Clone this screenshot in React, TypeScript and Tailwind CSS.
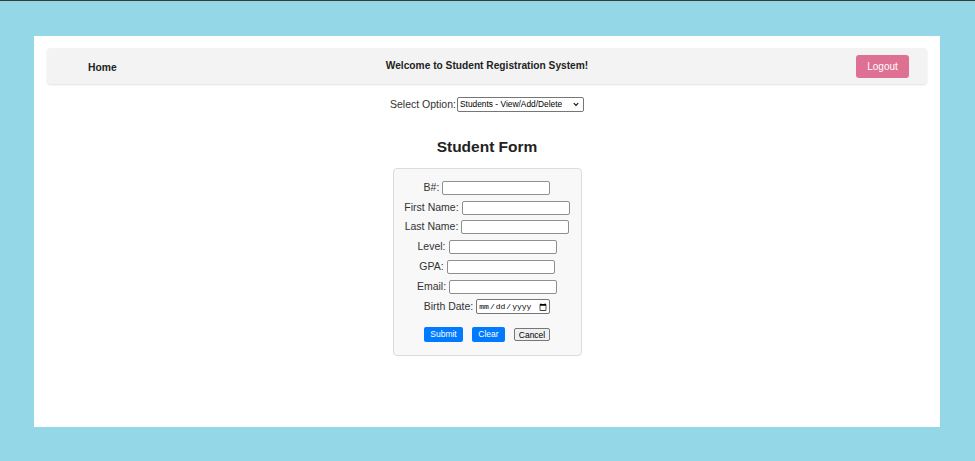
import React from 'react'

const fields = [
    { label: 'B#:', type: 'text' },
    { label: 'First Name:', type: 'text' },
    { label: 'Last Name:', type: 'text' },
    { label: 'Level:', type: 'text' },
    { label: 'GPA:', type: 'text' },
    { label: 'Email:', type: 'email' },
]

export default function App() {
    return (
        <div className="min-h-[461px] bg-[#94d8e8] border-t border-[#3a3a3a] font-['Liberation_Sans',Arial,sans-serif] text-[#222]">
            <div className="pt-[35px] pl-[34px] pr-[35px] pb-[34px]">
                <div className="bg-white h-[391px] px-[13px] pt-[12px]">

                    {/* Navbar */}
                    <nav className="h-[36px] bg-[#f3f3f3] rounded-[4px] shadow-[0_1px_2px_rgba(0,0,0,0.12)] grid grid-cols-[1fr_auto_1fr] items-center">
                        <div className="pl-[41px]">
                            <a href="#" className="text-[10.3px] font-bold text-[#222]">Home</a>
                        </div>
                        <div className="text-[10.2px] font-bold text-[#222]">
                            Welcome to Student Registration System!
                        </div>
                        <div className="flex justify-end pr-[18px]">
                            <button className="w-[53px] h-[23px] rounded-[3px] bg-[#de7094] text-white text-[10px]">
                                Logout
                            </button>
                        </div>
                    </nav>

                    {/* Option select */}
                    <div className="mt-[13px] flex justify-center items-center gap-[1px]">
                        <span className="text-[10.5px] text-[#333]">Select Option:</span>
                        <div className="relative">
                            <select className="appearance-none block w-[127px] h-[15px] border border-[#767676] rounded-[2px] bg-white text-[8.4px] text-black pl-[2px] leading-[13px]">
                                <option>Students - View/Add/Delete</option>
                            </select>
                            <svg className="absolute right-[5px] top-[5px] pointer-events-none" width="6" height="5" viewBox="0 0 6 5">
                                <path d="M0.8 1.2 L3 3.4 L5.2 1.2" fill="none" stroke="#111" strokeWidth="1.2" />
                            </svg>
                        </div>
                    </div>

                    <h3 className="mt-[24px] text-center text-[15.5px] font-bold text-[#222] leading-[20px]">
                        Student Form
                    </h3>

                    {/* Form */}
                    <form className="mt-[11px] mx-auto w-[189px] h-[188px] bg-[#f8f8f8] border border-[#dcdcdc] rounded-[4px] pt-[12px]">
                        {fields.map((f) => (
                            <div key={f.label} className="flex justify-center items-center gap-[3px] h-[14px] mb-[5.8px]">
                                <label className="text-[10.5px] text-[#333]">{f.label}</label>
                                <input type={f.type} className="w-[108px] h-[14px] bg-white border border-[#8f8f8f] rounded-[2px]" />
                            </div>
                        ))}
                        <div className="flex justify-center items-center gap-[3px] h-[14px]">
                            <label className="text-[10.5px] text-[#333]">Birth Date:</label>
                            <input
                                type="date"
                                className="w-[74px] h-[15px] bg-white border border-[#767676] rounded-[2px] text-[8px] text-black font-['Liberation_Mono',monospace] pl-[1px] pr-0"
                            />
                        </div>

                        <div className="mt-[13px] flex justify-center items-center gap-[9px]">
                            <button type="button" className="w-[39px] h-[15px] bg-[#007bff] text-white text-[8.5px] rounded-[2px]">
                                Submit
                            </button>
                            <button type="button" className="w-[33px] h-[15px] bg-[#007bff] text-white text-[8.5px] rounded-[2px]">
                                Clear
                            </button>
                            <button type="button" className="w-[36px] h-[13px] bg-[#efefef] border border-[#767676] text-black text-[8.5px] rounded-[2px]">
                                Cancel
                            </button>
                        </div>
                    </form>
                </div>
            </div>
        </div>
    )
}
